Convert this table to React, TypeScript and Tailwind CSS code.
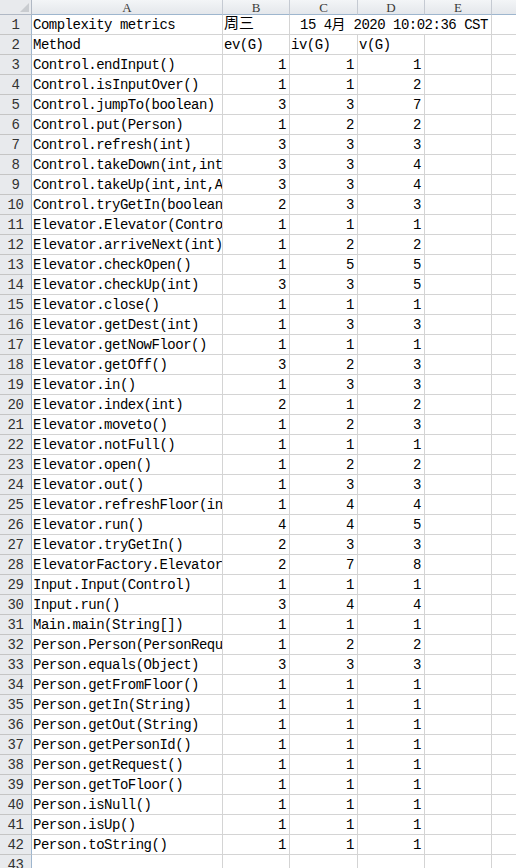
import React from "react";

const rows: [string, number, number, number][] = [
  ["Control.endInput()", 1, 1, 1],
  ["Control.isInputOver()", 1, 1, 2],
  ["Control.jumpTo(boolean)", 3, 3, 7],
  ["Control.put(Person)", 1, 2, 2],
  ["Control.refresh(int)", 3, 3, 3],
  ["Control.takeDown(int,int,ArrayList)", 3, 3, 4],
  ["Control.takeUp(int,int,ArrayList)", 3, 3, 4],
  ["Control.tryGetIn(boolean,int)", 2, 3, 3],
  ["Elevator.Elevator(Control)", 1, 1, 1],
  ["Elevator.arriveNext(int)", 1, 2, 2],
  ["Elevator.checkOpen()", 1, 5, 5],
  ["Elevator.checkUp(int)", 3, 3, 5],
  ["Elevator.close()", 1, 1, 1],
  ["Elevator.getDest(int)", 1, 3, 3],
  ["Elevator.getNowFloor()", 1, 1, 1],
  ["Elevator.getOff()", 3, 2, 3],
  ["Elevator.in()", 1, 3, 3],
  ["Elevator.index(int)", 2, 1, 2],
  ["Elevator.moveto()", 1, 2, 3],
  ["Elevator.notFull()", 1, 1, 1],
  ["Elevator.open()", 1, 2, 2],
  ["Elevator.out()", 1, 3, 3],
  ["Elevator.refreshFloor(int)", 1, 4, 4],
  ["Elevator.run()", 4, 4, 5],
  ["Elevator.tryGetIn()", 2, 3, 3],
  ["ElevatorFactory.Elevator(Control)", 2, 7, 8],
  ["Input.Input(Control)", 1, 1, 1],
  ["Input.run()", 3, 4, 4],
  ["Main.main(String[])", 1, 1, 1],
  ["Person.Person(PersonRequest)", 1, 2, 2],
  ["Person.equals(Object)", 3, 3, 3],
  ["Person.getFromFloor()", 1, 1, 1],
  ["Person.getIn(String)", 1, 1, 1],
  ["Person.getOut(String)", 1, 1, 1],
  ["Person.getPersonId()", 1, 1, 1],
  ["Person.getRequest()", 1, 1, 1],
  ["Person.getToFloor()", 1, 1, 1],
  ["Person.isNull()", 1, 1, 1],
  ["Person.isUp()", 1, 1, 1],
  ["Person.toString()", 1, 1, 1],
];

const mono = { fontFamily: '"Liberation Mono", "Noto Sans CJK SC", monospace' };

function RowHead({ n }: { n: number }) {
  return (
    <div className="w-[32px] shrink-0 h-full border-r border-b border-r-[#9eb6ce] border-b-[#c5c5c5] bg-[#e8eaed] flex items-center justify-center pt-[1px] text-[14px] text-[#333] tracking-[-0.5px]">
      {n}
    </div>
  );
}

const cell = "h-full shrink-0 border-r border-b border-[#d4d4d4] overflow-hidden whitespace-nowrap flex items-center pt-[2px]";
const rowCls = "flex h-[20px] text-[14px] tracking-[-0.5px]";

export default function App() {
  return (
    <div className="w-[516px] h-[868px] overflow-hidden bg-white text-black" style={mono}>
      {/* column header */}
      <div className="flex h-[15px]">
        <div className="w-[32px] shrink-0 h-full border-r border-b border-[#b0b8c4] bg-[#e8eaed] relative">
          <div className="absolute right-[2px] bottom-[2px] w-0 h-0 border-l-[9px] border-l-transparent border-b-[9px] border-b-[#c9ccd0]" />
        </div>
        {[
          ["A", "w-[191px]"],
          ["B", "w-[67px]"],
          ["C", "w-[68px]"],
          ["D", "w-[67px]"],
          ["E", "w-[67px]"],
        ].map(([l, w]) => (
          <div
            key={l}
            className={`${w} shrink-0 h-full border-r border-b border-r-[#c5cad2] border-b-[#9eb6ce] bg-gradient-to-b from-[#f3f5f7] to-[#e4e7eb] flex items-center justify-center text-[13px] leading-none text-[#3a3a3a]`}
            style={{ fontFamily: '"Liberation Serif", serif' }}
          >
            {l}
          </div>
        ))}
        <div className="flex-1 h-full border-b border-b-[#9eb6ce] bg-gradient-to-b from-[#f3f5f7] to-[#e4e7eb]" />
      </div>

      {/* row 1 */}
      <div className={rowCls}>
        <RowHead n={1} />
        <div className={`${cell} w-[191px] pl-[1px]`}>Complexity metrics</div>
        <div className={`${cell} w-[67px] pl-[1px]`}>
          <span className="text-[15px] tracking-[0px]">周三</span>
        </div>
        <div className={`${cell} w-[202px] pl-[10px]`}>
          15 4<span className="text-[14px] tracking-[0px]">月</span>&nbsp;2020 10:02:36 CST
        </div>
        <div className="flex-1 h-full border-b border-[#d4d4d4]" />
      </div>

      {/* row 2 */}
      <div className={rowCls}>
        <RowHead n={2} />
        <div className={`${cell} w-[191px] pl-[1px]`}>Method</div>
        <div className={`${cell} w-[67px] pl-[1px]`}>ev(G)</div>
        <div className={`${cell} w-[68px] pl-[1px]`}>iv(G)</div>
        <div className={`${cell} w-[67px] pl-[1px]`}>v(G)</div>
        <div className={`${cell} w-[67px]`} />
        <div className="flex-1 h-full border-b border-[#d4d4d4]" />
      </div>

      {rows.map(([name, a, b, c], i) => (
        <div key={i} className={rowCls}>
          <RowHead n={i + 3} />
          <div className={`${cell} w-[191px] pl-[1px]`}>{name}</div>
          <div className={`${cell} w-[67px] justify-end pr-[3px]`}>{a}</div>
          <div className={`${cell} w-[68px] justify-end pr-[3px]`}>{b}</div>
          <div className={`${cell} w-[67px] justify-end pr-[3px]`}>{c}</div>
          <div className={`${cell} w-[67px]`} />
          <div className="flex-1 h-full border-b border-[#d4d4d4]" />
        </div>
      ))}

      {/* row 43 */}
      <div className={rowCls}>
        <RowHead n={43} />
        <div className={`${cell} w-[191px]`} />
        <div className={`${cell} w-[67px]`} />
        <div className={`${cell} w-[68px]`} />
        <div className={`${cell} w-[67px]`} />
        <div className={`${cell} w-[67px]`} />
        <div className="flex-1 h-full border-b border-[#d4d4d4]" />
      </div>
    </div>
  );
}
